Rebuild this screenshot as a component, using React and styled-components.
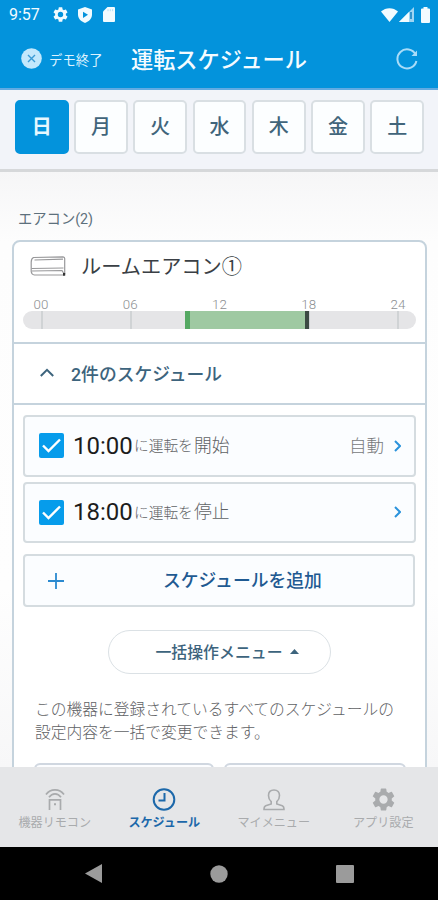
import React, { useState } from 'react';
import styled, { createGlobalStyle } from 'styled-components'

const GlobalStyle = createGlobalStyle`
  * {
    box-sizing: border-box;
  }
  body {
    margin: 0;
    font-family: Roboto, "Noto Sans CJK JP", sans-serif;
  }
  button {
    font-family: inherit;
    padding: 0;
    margin: 0;
  }
`;

const Screen = styled.div`
  width: 438px;
  height: 900px;
  display: flex;
  flex-direction: column;
  overflow: hidden;
  background-color: #fbfbfb;
`;

const StatusBar = styled.div`
  height: 29px;
  flex-shrink: 0;
  display: flex;
  align-items: center;
  justify-content: space-between;
  padding: 0 8px 0 9px;
  background-color: #0393dc;
  color: #f2fbff;
`;

const StatusGroup = styled.div`
  display: flex;
  align-items: center;
  gap: ${(p) => p.$gap}px;
`;

const Clock = styled.span`
  width: 33px;
  font-size: 16px;
  line-height: 18px;
`;

const Header = styled.header`
  height: 61px;
  flex-shrink: 0;
  display: flex;
  align-items: center;
  padding: 0 20px 0 21px;
  background-color: #0393dc;
  border-bottom: 2px solid #62abe2;
  color: #fff;
`;

const ExitButton = styled.button`
  display: flex;
  align-items: center;
  gap: 7px;
  width: 110px;
  border: 0;
  background: none;
  color: #dcf2ff;
  font-size: 13.4px;
  white-space: nowrap;
`;

const Title = styled.h1`
  margin: 0;
  padding-top: 2px;
  flex: 1;
  font-size: 22.2px;
  line-height: 30px;
  font-weight: 500;
  color: #f4fbff;
`;

const DayBar = styled.div`
  height: 82px;
  flex-shrink: 0;
  display: grid;
  grid-template-columns: repeat(7, 1fr);
  column-gap: 5.6px;
  padding: 9.5px 14px 0 15px;
  background-color: #f2f4f9;
  border-bottom: 3px solid #d6d8da;
`;

const Day = styled.button`
  height: 54px;
  border: 2px solid ${(p) => (p.$active ? '#0393dc' : '#d9dfe3')};
  border-radius: 5px;
  background-color: ${(p) => (p.$active ? '#0393dc' : '#fcfeff')};
  color: ${(p) => (p.$active ? '#e6f8ff' : '#41657b')};
  font-size: 20px;
  line-height: 48px;
  font-weight: ${(p) => (p.$active ? 700 : 500)};
`;

const Content = styled.main`
  flex: 1;
  min-height: 0;
  overflow: hidden;
  padding: 0 11px 0 12px;
  background: linear-gradient(#f6f6f7, #fdfdfd 70px, #fefefe 70%, #f7f7f8);
`;

const GroupLabel = styled.div`
  padding: 37px 0 0 6px;
  height: 68px;
  font-size: 14.3px;
  line-height: 20px;
  color: #5d707c;
`;

const Card = styled.section`
  height: 600px;
  border: 2px solid #c5d3dd;
  border-radius: 8px;
  background-color: #fff;
`;

const DeviceHead = styled.div`
  display: flex;
  align-items: center;
  gap: 15px;
  height: 49px;
  padding-left: 16px;
`;

const DeviceName = styled.h2`
  margin: 0;
  font-size: 20.2px;
  line-height: 30px;
  font-weight: 400;
  color: #3a3f45;
`;

const TimeLine = styled.div`
  height: 53px;
  padding: 6px 9px 0;
  border-bottom: 2px solid #c5d3dd;
`;

const Hours = styled.div`
  display: flex;
  justify-content: space-between;
  padding: 0 9px;
  height: 14px;
  font-size: 13.3px;
  line-height: 15px;
  font-weight: 300;
  color: #8c8f92;
`;

const Hour = styled.span`
  width: 18px;
  text-align: center;
`;

const Track = styled.div`
  display: flex;
  justify-content: center;
  height: 18px;
  border-radius: 9px;
  background-color: #e5e5e7;
`;

const Scale = styled.div`
  position: relative;
  width: 356px;
  height: 18px;
`;

const Tick = styled.div`
  position: absolute;
  top: 0;
  width: 2px;
  height: 18px;
  margin-left: -1px;
  background-color: #d0d3d5;
`;

const Running = styled.div`
  position: absolute;
  top: 0;
  height: 18px;
  margin-left: -5px;
  background-color: #9fc9a2;
  border-left: 5px solid #55a862;
  border-right: 4px solid #3c4a44;
`;

const Toggle = styled.button`
  display: flex;
  align-items: center;
  gap: 17px;
  width: 100%;
  height: 61px;
  padding: 0 0 2px 26px;
  border: 0;
  border-bottom: 2px solid #c5d3dd;
  background: none;
  color: #3d647d;
  font-size: 17.8px;
  font-weight: 500;
`;

const List = styled.div`
  display: flex;
  flex-direction: column;
  gap: 5px;
  padding: 10px 9px 0;
`;

const Item = styled.div`
  display: flex;
  align-items: center;
  height: 61.5px;
  padding: 0 13px 0 14px;
  border: 2px solid #d5dce0;
  border-radius: 4px;
  background-color: #fbfdff;
  color: #5f6265;
`;

const Check = styled.div`
  display: flex;
  align-items: center;
  justify-content: center;
  width: 25px;
  height: 25px;
  margin-right: 9px;
  border-radius: 2px;
  background-color: #069ceb;
`;

const Time = styled.span`
  width: 61px;
  font-size: 24px;
  line-height: 28px;
  color: #1c1c1c;
`;

const Particle = styled.span`
  width: 60px;
  padding-top: 1px;
  font-size: 14.7px;
  line-height: 24px;
  font-weight: 300;
  white-space: nowrap;
`;

const Action = styled.span`
  flex: 1;
  font-size: 17.8px;
  line-height: 26px;
  font-weight: 300;
`;

const Mode = styled.span`
  margin-right: 10px;
  font-size: 17.5px;
  line-height: 26px;
  font-weight: 300;
  color: #77797b;
`;

const AddButton = styled.button`
  display: flex;
  align-items: center;
  width: 392px;
  height: 53px;
  margin: 11px 9px 0;
  padding-left: 23px;
  border: 2px solid #d5dce0;
  border-radius: 4px;
  background-color: #fbfdff;
  color: #1f5a92;
`;

const AddText = styled.span`
  padding: 1px 0 0 99px;
  font-size: 17.8px;
  line-height: 26px;
  font-weight: 500;
`;

const MenuButton = styled.button`
  display: flex;
  align-items: center;
  justify-content: center;
  gap: 7px;
  width: 223px;
  height: 44px;
  margin: 23px auto 0;
  padding: 0 0 1px 15px;
  border: 1.5px solid #dbe1e5;
  border-radius: 22px;
  background-color: #fff;
  color: #3d647d;
  font-size: 15.9px;
  font-weight: 500;
`;

const Note = styled.p`
  margin: 24px 0 0 21px;
  font-size: 15.75px;
  line-height: 23px;
  font-weight: 300;
  color: #5f6265;
  white-space: nowrap;
`;

const BulkRow = styled.div`
  display: grid;
  grid-template-columns: 180px 182px;
  gap: 10px;
  margin: 19px 0 0 20px;
`;

const BulkButton = styled.div`
  height: 48px;
  border: 2px solid #d0d7e0;
  border-radius: 6px;
  background-color: #fcfdff;
`;

const TabBar = styled.nav`
  height: 80px;
  flex-shrink: 0;
  display: grid;
  grid-template-columns: repeat(4, 1fr);
  background-color: #e5e6e8;
`;

const Tab = styled.div`
  display: flex;
  flex-direction: column;
  align-items: center;
  padding-top: 21px;
  gap: 3px;
  font-size: 12.1px;
  line-height: 18px;
  font-weight: ${(p) => (p.$active ? 700 : 400)};
  color: ${(p) => (p.$active ? '#1c68aa' : '#a9abad')};
`;

const AndroidBar = styled.div`
  height: 53px;
  flex-shrink: 0;
  display: grid;
  grid-template-columns: repeat(3, 126px);
  justify-content: center;
  align-items: center;
  justify-items: center;
  background-color: #000;
`;

const GEAR = 'M19.14 12.94a7 7 0 0 0 0-1.88l2.03-1.58a.5.5 0 0 0 .12-.61l-1.92-3.32a.49.49 0 0 0-.59-.22l-2.39.96a7 7 0 0 0-1.62-.94l-.36-2.54a.48.48 0 0 0-.48-.41h-3.84a.48.48 0 0 0-.47.41l-.36 2.54a7.3 7.3 0 0 0-1.62.94l-2.39-.96a.48.48 0 0 0-.59.22L2.74 8.87a.47.47 0 0 0 .12.61l2.03 1.58a7 7 0 0 0 0 1.88l-2.03 1.58a.5.5 0 0 0-.12.61l1.92 3.32c.12.22.37.29.59.22l2.39-.96c.5.38 1.03.7 1.62.94l.36 2.54c.05.24.24.41.48.41h3.84c.24 0 .44-.17.47-.41l.36-2.54a7.3 7.3 0 0 0 1.62-.94l2.39.96c.22.08.47 0 .59-.22l1.92-3.32a.47.47 0 0 0-.12-.61zM12 15.6a3.6 3.6 0 1 1 0-7.2 3.6 3.6 0 0 1 0 7.2z';

const Gear = ({ size }) => (
  <svg width={size} height={size} viewBox="2 2 20 20" fill="currentColor">
    <path d={GEAR} />
  </svg>
)

const Shield = () => (
  <svg width="14" height="16" viewBox="0 0 14 16">
    <path d="M7 0l7 2.6v4.9c0 4-2.9 7.1-7 8.4-4.1-1.3-7-4.4-7-8.4V2.6z" fill="currentColor" />
    <path d="M5 4.7l5 3.1-5 3.1z" fill="#0393dc" />
  </svg>
)

const SdCard = () => (
  <svg width="12" height="15" viewBox="0 0 12 15">
    <path d="M4.5 0H11a1 1 0 0 1 1 1v13a1 1 0 0 1-1 1H1a1 1 0 0 1-1-1V4.5z" fill="currentColor" />
    <path d="M5 2.2v2M7.3 2.2v2M9.6 2.2v2" stroke="#b5dff6" strokeWidth="1" />
  </svg>
)

const Wifi = () => (
  <svg width="17" height="14" viewBox="0 0 17 14">
    <path d="M8.5 14L0 3.5C4.7-1 12.3-1 17 3.5z" fill="currentColor" />
  </svg>
)

const Signal = () => (
  <svg width="15" height="15" viewBox="0 0 15 15">
    <path d="M15 0v15H0z" fill="#9fd5f3" />
    <path d="M10 5v10H0z" fill="currentColor" />
    <path d="M12 5v7" stroke="#0f7fc0" strokeWidth="1.5" />
  </svg>
)

const Battery = () => (
  <svg width="9" height="16" viewBox="0 0 9 16">
    <path d="M2.5 0h4v1.500H8a1 1 0 0 1 1 1V15a1 1 0 0 1-1 1H1a1 1 0 0 1-1-1V2.500a1 1 0 0 1 1-1h1.500z" fill="currentColor" />
  </svg>
)

const CloseIcon = () => (
  <svg width="21" height="21" viewBox="0 0 21 21">
    <circle cx="10.5" cy="10.5" r="10.3" fill="#c3e8fc" />
    <path d="M7 7l7 7M14 7l-7 7" stroke="#3a9bd6" strokeWidth="1.4" />
  </svg>
)

const Reload = () => (
  <svg width="22" height="22" viewBox="0 0 22 22" fill="none" stroke="#a9dcf8" strokeWidth="2">
    <path d="M19.6 6.500A9.600 9.600 0 1 0 20.400 13" />
    <path d="M21 2.500v5.500h-5.500z" fill="#a9dcf8" stroke="none" />
  </svg>
)

const AirCon = () => (
  <svg width="36" height="21" viewBox="0 0 36 21" fill="none" stroke="#98989a" strokeWidth="1.2">
    <path d="M3.500 1.500L33 .8Q34.700 1 34.700 2.500v15.500q0 1-1.200 1H4.500Q1.500 18.500 1.200 15.500V6Q1.300 2.500 3.500 1.500z" />
    <path d="M1.500 12.500L33.500 12M2 15L32 14.500l2.500 4M4.500 4L33 3.200" />
    <path d="M33 17h2.200v2.700H33z" fill="#333" stroke="none" />
  </svg>
)

const ChevronUp = () => (
  <svg width="14" height="9" viewBox="0 0 14 9" fill="none" stroke="currentColor" strokeWidth="2">
    <path d="M.8 8L7 1.800 13.200 8" />
  </svg>
)

const ChevronRight = () => (
  <svg width="7" height="12" viewBox="0 0 7 12" fill="none" stroke="#2b93dc" strokeWidth="2">
    <path d="M1 1l5 5-5 5" />
  </svg>
)

const Remote = () => (
  <svg width="20" height="23" viewBox="0 0 20 23" fill="none" stroke="currentColor" strokeWidth="1.7">
    <path d="M1 6.500C5.500.2 14.500.2 19 6.500" />
    <path d="M4 9.300c3.300-4.600 8.700-4.600 12 0" />
    <path d="M4.500 22V11.800h11V22" />
    <path d="M10 15.200v2" strokeWidth="2" />
  </svg>
)

const ClockIcon = () => (
  <svg width="24" height="23" viewBox="0 0 24 23" fill="none" stroke="currentColor" strokeWidth="2">
    <circle cx="12" cy="11.5" r="10.3" />
    <path d="M12.500 5v7.500h-6" />
  </svg>
)

const Person = () => (
  <svg width="22" height="23" viewBox="0 0 22 23" fill="none" stroke="currentColor" strokeWidth="1.6">
    <path d="M11 2C7.300 2 5.500 4.500 5.500 7.500c0 2.500 1 4.700 2.700 6.200v2.300l-5.500 1.700C1.500 18.200 1 19.500 1 21.500h20c0-2-.5-3.300-1.700-3.800L13.800 16v-2.300c1.700-1.500 2.700-3.700 2.700-6.200C16.500 4.500 14.700 2 11 2z" />
  </svg>
)

const days = ['日', '月', '火', '水', '木', '金', '土']
const hours = ['00', '06', '12', '18', '24']

const schedules = [
  { time: '10:00', action: '開始', mode: '自動' },
  { time: '18:00', action: '停止' },
]

const tabs = [
  { label: '機器リモコン', icon: <Remote /> },
  { label: 'スケジュール', icon: <ClockIcon /> },
  { label: 'マイメニュー', icon: <Person /> },
  { label: 'アプリ設定', icon: <Gear size={23} /> },
]

const App = () => {

  const [day, setDay] = useState(0)

  // 10:00 - 18:00
  const start = 10 / 24 * 100
  const length = 8 / 24 * 100

  return (
    <Screen>
      <GlobalStyle />
      <StatusBar>
        <StatusGroup $gap={10.5}>
          <Clock>9:57</Clock>
          <Gear size={15} />
          <Shield />
          <SdCard />
        </StatusGroup>
        <StatusGroup $gap={7}>
          <StatusGroup $gap={1}>
            <Wifi />
            <Signal />
          </StatusGroup>
          <Battery />
        </StatusGroup>
      </StatusBar>
      <Header>
        <ExitButton><CloseIcon />デモ終了</ExitButton>
        <Title>運転スケジュール</Title>
        <Reload />
      </Header>
      <DayBar>
        {days.map((d, i) => (
          <Day key={d} $active={i === day} onClick={() => setDay(i)}>{d}</Day>
        ))}
      </DayBar>
      <Content>
        <GroupLabel>エアコン(2)</GroupLabel>
        <Card>
          <DeviceHead>
            <AirCon />
            <DeviceName>ルームエアコン①</DeviceName>
          </DeviceHead>
          <TimeLine>
            <Hours>
              {hours.map((h) => <Hour key={h}>{h}</Hour>)}
            </Hours>
            <Track>
              <Scale>
                {hours.map((h) => <Tick key={h} style={{ left: `${h / 24 * 100}%` }} />)}
                <Running style={{ left: `${start}%`, width: `calc(${length}% + 6px)` }} />
              </Scale>
            </Track>
          </TimeLine>
          <Toggle><ChevronUp />2件のスケジュール</Toggle>
          <List>
            {schedules.map((s) => (
              <Item key={s.time}>
                <Check>
                  <svg width="19" height="15" viewBox="0 0 19 15" fill="none" stroke="#fff" strokeWidth="2.4">
                    <path d="M1 7.500l5.500 5.500L18 1.500" />
                  </svg>
                </Check>
                <Time>{s.time}</Time>
                <Particle>に運転を</Particle>
                <Action>{s.action}</Action>
                {s.mode && <Mode>{s.mode}</Mode>}
                <ChevronRight />
              </Item>
            ))}
          </List>
          <AddButton>
            <svg width="16" height="16" viewBox="0 0 16 16" stroke="#2b8ad0" strokeWidth="1.8">
              <path d="M8 0v16M0 8h16" />
            </svg>
            <AddText>スケジュールを追加</AddText>
          </AddButton>
          <MenuButton>
            一括操作メニュー
            <svg width="9" height="5" viewBox="0 0 9 5" fill="currentColor">
              <path d="M4.500 0L9 5H0z" />
            </svg>
          </MenuButton>
          <Note>
            この機器に登録されているすべてのスケジュールの<br />
            設定内容を一括で変更できます。
          </Note>
          <BulkRow>
            <BulkButton />
            <BulkButton />
          </BulkRow>
        </Card>
      </Content>
      <TabBar>
        {tabs.map((t, i) => (
          <Tab key={t.label} $active={i === 1}>
            {t.icon}
            {t.label}
          </Tab>
        ))}
      </TabBar>
      <AndroidBar>
        <svg width="17" height="19" viewBox="0 0 17 19"><path d="M17 0v19L0 9.500z" fill="#9b9b9b" /></svg>
        <svg width="18" height="18" viewBox="0 0 18 18"><circle cx="9" cy="9" r="8.7" fill="#9b9b9b" /></svg>
        <svg width="18" height="18" viewBox="0 0 18 18"><rect width="18" height="18" rx="1" fill="#9b9b9b" /></svg>
      </AndroidBar>
    </Screen>
  )
}

export default App
